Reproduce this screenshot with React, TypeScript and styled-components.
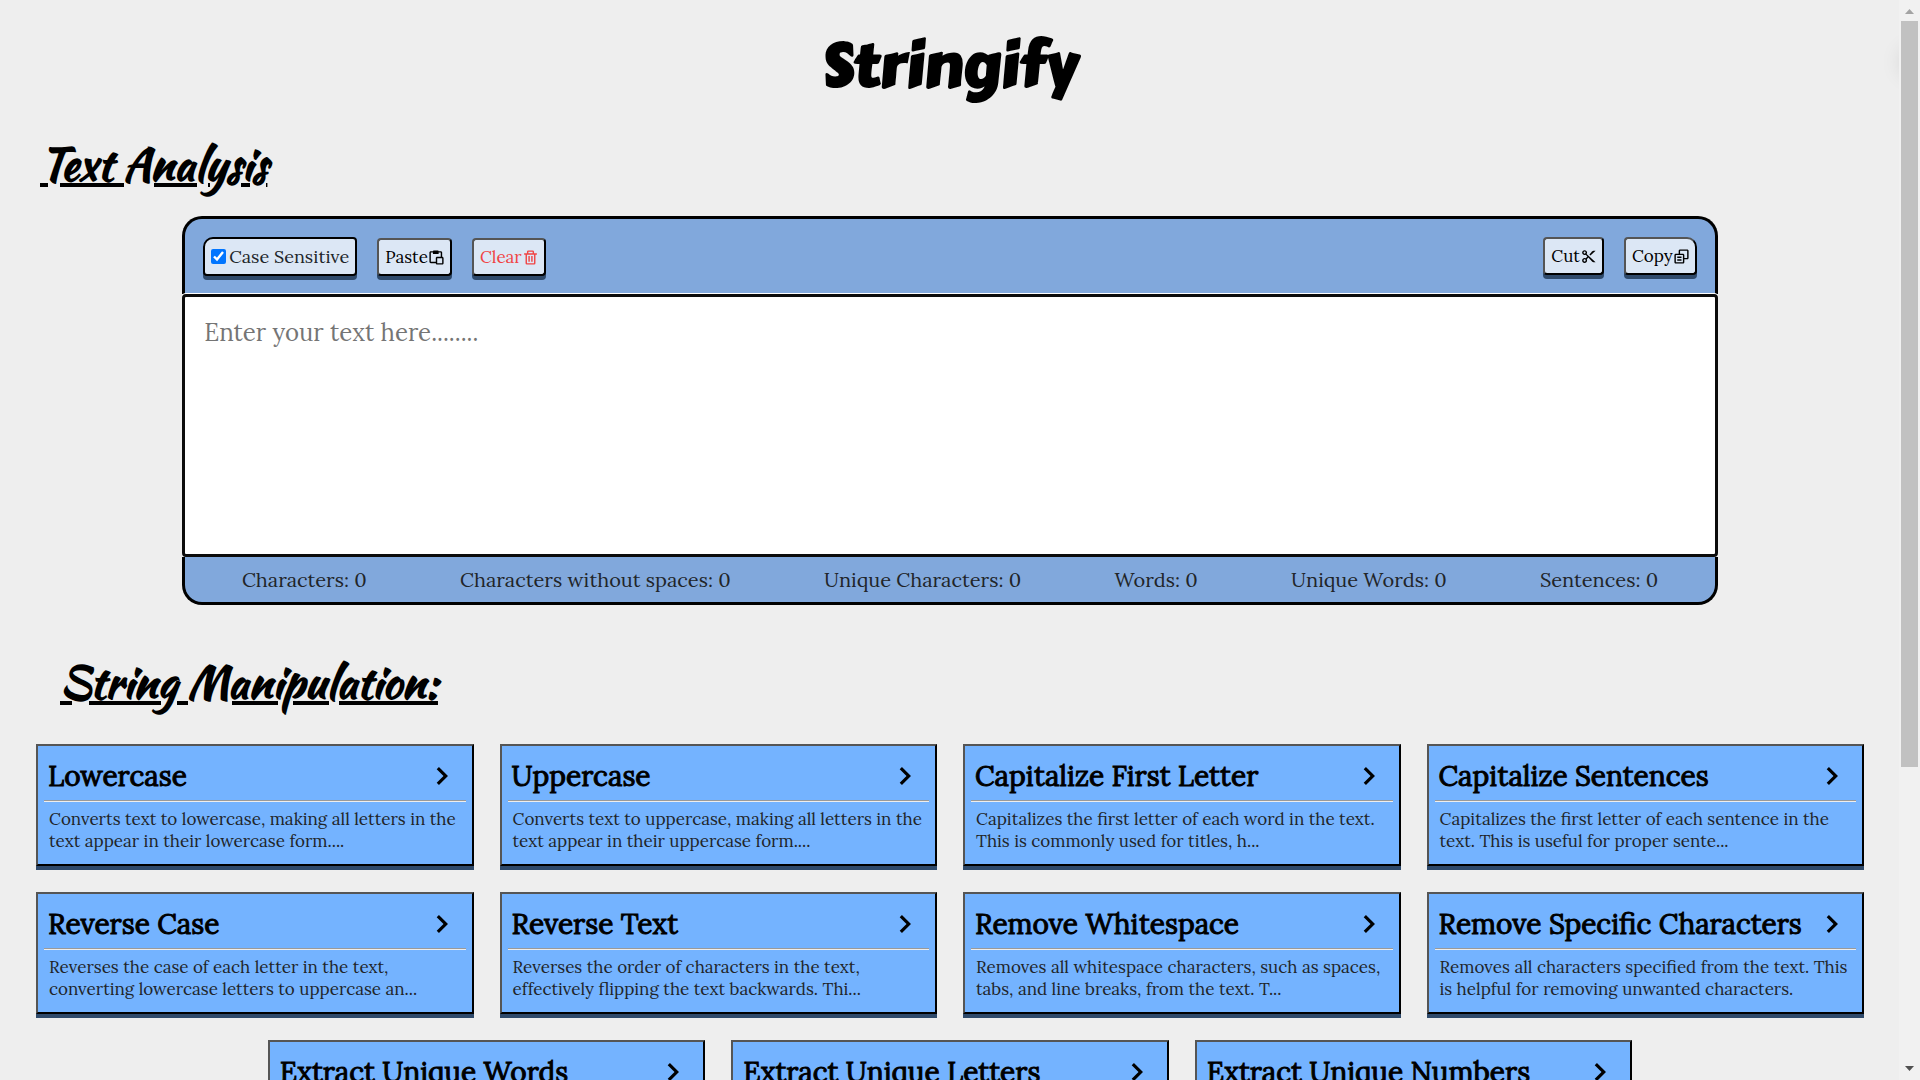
import React from "react";
import styled, { createGlobalStyle } from "styled-components";
import { BiPaste, BiTrash, BiCut, BiCopyAlt, BiChevronRight } from "react-icons/bi";

const serif = `"Lora", "Liberation Serif", serif`;
const script = `"Kaushan Script", Lato, sans-serif`;

const GlobalStyle = createGlobalStyle`
  * { box-sizing: border-box; }
  body { margin: 0; background: #eeeeee; color: #000; font-family: ${serif}; }
`;

const Screen = styled.div`
  display: grid;
  grid-template-columns: minmax(0, 1fr) 21px;
  height: 100vh;
  overflow: hidden;
`;

const Page = styled.main`
  position: relative;
  overflow-y: auto;
  overflow-x: hidden;
  scrollbar-width: none;
  padding: 0 35px 26px 36px;
`;

const HiddenToast = styled.div`
  position: absolute;
  top: 46px;
  left: 100%;
  width: 200px;
  height: 32px;
  border-radius: 16px;
  box-shadow: 0 0 20px rgba(0, 0, 0, 0.1);
`;

const Logo = styled.h1`
  margin: 0;
  padding-top: 26px;
  font: bold 60px/80px "Carter One", Lato, sans-serif;
  text-align: center;
`;

const SectionTitle = styled.h2<{ $indent: number }>`
  margin: 0;
  padding-left: ${(p) => p.$indent}px;
  font: bold 44px/56px ${script};
  text-decoration: underline 4px;
  text-underline-offset: 3px;
`;

const Analysis = styled.section`
  padding-top: 30px;
`;

const Manipulation = styled.section`
  padding-top: 49px;
`;

const Editor = styled.div`
  width: 84%;
  margin: 24px auto 0;
`;

const Toolbar = styled.div`
  display: flex;
  justify-content: space-between;
  align-items: flex-start;
  height: 78px;
  padding: 18px 18px 0;
  background: #81a8dc;
  border: 3px solid #000;
  border-bottom: 0;
  border-radius: 20px 20px 0 0;
`;

const ToolGroup = styled.div`
  display: flex;
  align-items: flex-end;
  gap: 20px;
`;

const CaseToggle = styled.label`
  display: flex;
  align-items: center;
  gap: 3px;
  height: 39px;
  padding: 0 6px;
  background: #dce7f5;
  border: 2px solid #000;
  border-radius: 10px 4px 4px 4px;
  box-shadow: 0 4px 0 #2f4a6b;
  color: #212529;
  font-size: 18px;
`;

const Check = styled.input`
  width: 15px;
  height: 15px;
  margin: 0;
  accent-color: #0075ff;
`;

const ToolButton = styled.button<{ $danger?: boolean; $last?: boolean }>`
  display: flex;
  align-items: center;
  height: 38px;
  padding: 0 5px 0 6px;
  background: #dce7f5;
  color: ${(p) => (p.$danger ? "#f04444" : "#000")};
  border: 2px solid;
  border-color: #555 #000 #000 #555;
  border-radius: ${(p) => (p.$last ? "4px 10px 4px 4px" : "4px")};
  box-shadow: 0 4px 0 #2f4a6b;
  font: 17px ${serif};
`;

const TextBox = styled.textarea`
  display: block;
  width: 100%;
  height: 263px;
  padding: 18px 19px;
  border: 3px solid #0b0b0b;
  border-radius: 4px;
  box-shadow: 0 -1px 0 #fff;
  background: #fff;
  outline: 0;
  resize: none;
  font: 24px/36px ${serif};
  &::placeholder { color: #757575; }
`;

const Stats = styled.div`
  display: flex;
  justify-content: space-around;
  align-items: center;
  height: 48px;
  padding: 0 10px;
  background: #81a8dc;
  border: 3px solid #000;
  border-top: 0;
  border-radius: 0 0 20px 20px;
  color: #212529;
  font-size: 20px;
`;

const CardList = styled.div`
  display: flex;
  flex-wrap: wrap;
  justify-content: center;
  gap: 26px;
  margin-top: 34px;
`;

const Card = styled.button`
  display: flex;
  flex-direction: column;
  align-items: stretch;
  justify-content: flex-start;
  width: calc((100% - 78px) / 4);
  height: 122px;
  padding: 7px 6px 0;
  background: #74b3ff;
  border: 2px solid;
  border-color: #555 #000 #000 #555;
  box-shadow: 0 4px 0 #2f4a6b;
  color: #000;
  font-family: ${serif};
  text-align: left;
`;

const CardHead = styled.span`
  display: flex;
  justify-content: space-between;
  align-items: center;
  flex: none;
  height: 48px;
  padding: 0 6px 2px 4px;
  border-bottom: 1px solid #9a9a9a;
  box-shadow: 0 1px 0 #eee;
  font-size: 28px;
  line-height: 36px;
  white-space: nowrap;
  -webkit-text-stroke: 1px #000;
`;

const Chevron = styled(BiChevronRight)`
  flex: none;
  stroke: none;
`;

const CardText = styled.span`
  display: block;
  padding: 7px 2px 0 5px;
  color: #212529;
  font-size: 17px;
  line-height: 22px;
`;

const ScrollTrack = styled.div`
  display: flex;
  flex-direction: column;
  align-items: center;
  background: #f1f1f1;
`;

const ScrollThumb = styled.div`
  width: 17px;
  height: 746px;
  margin: 7px 0 auto;
  background: #c1c1c1;
`;

const Arrow = styled.svg<{ $down?: boolean }>`
  display: block;
  width: 9px;
  height: 5px;
  margin: ${(p) => (p.$down ? "0 0 9px" : "9px 0 0")};
  fill: ${(p) => (p.$down ? "#505050" : "#a3a3a3")};
`;

const stats = ["Characters", "Characters without spaces", "Unique Characters", "Words", "Unique Words", "Sentences"];

const tools = [
  ["Lowercase", "Converts text to lowercase, making all letters in the text appear in their lowercase form...."],
  ["Uppercase", "Converts text to uppercase, making all letters in the text appear in their uppercase form...."],
  ["Capitalize First Letter", "Capitalizes the first letter of each word in the text. This is commonly used for titles, h..."],
  ["Capitalize Sentences", "Capitalizes the first letter of each sentence in the text. This is useful for proper sente..."],
  ["Reverse Case", "Reverses the case of each letter in the text, converting lowercase letters to uppercase an..."],
  ["Reverse Text", "Reverses the order of characters in the text, effectively flipping the text backwards. Thi..."],
  ["Remove Whitespace", "Removes all whitespace characters, such as spaces, tabs, and line breaks, from the text. T..."],
  ["Remove Specific Characters", "Removes all characters specified from the text. This is helpful for removing unwanted characters."],
  ["Extract Unique Words", ""],
  ["Extract Unique Letters", ""],
  ["Extract Unique Numbers", ""],
];

export default function App() {
  return (
    <Screen>
      <GlobalStyle />
      <Page>
        <HiddenToast aria-hidden="true" />
        <Logo>Stringify</Logo>
        <Analysis>
          <SectionTitle $indent={4}>Text Analysis</SectionTitle>
          <Editor>
            <Toolbar>
              <ToolGroup>
                <CaseToggle>
                  <Check type="checkbox" defaultChecked />
                  Case Sensitive
                </CaseToggle>
                <ToolButton type="button">Paste<BiPaste size={17} /></ToolButton>
                <ToolButton type="button" $danger>Clear<BiTrash size={17} /></ToolButton>
              </ToolGroup>
              <ToolGroup>
                <ToolButton type="button">Cut<BiCut size={17} /></ToolButton>
                <ToolButton type="button" $last>Copy<BiCopyAlt size={17} /></ToolButton>
              </ToolGroup>
            </Toolbar>
            <TextBox aria-label="Text" placeholder="Enter your text here........" />
            <Stats>
              {stats.map((s) => <span key={s}>{s}: 0</span>)}
            </Stats>
          </Editor>
        </Analysis>
        <Manipulation>
          <SectionTitle $indent={24}>String Manipulation:</SectionTitle>
          <CardList>
            {tools.map(([title, text]) => (
              <Card key={title} type="button">
                <CardHead>{title}<Chevron size={38} /></CardHead>
                <CardText>{text}</CardText>
              </Card>
            ))}
          </CardList>
        </Manipulation>
      </Page>
      <ScrollTrack aria-hidden="true">
        <Arrow viewBox="0 0 18 10"><path d="M0 10 9 0 18 10z" /></Arrow>
        <ScrollThumb />
        <Arrow $down viewBox="0 0 18 10"><path d="M0 0h18L9 10z" /></Arrow>
      </ScrollTrack>
    </Screen>
  );
}
